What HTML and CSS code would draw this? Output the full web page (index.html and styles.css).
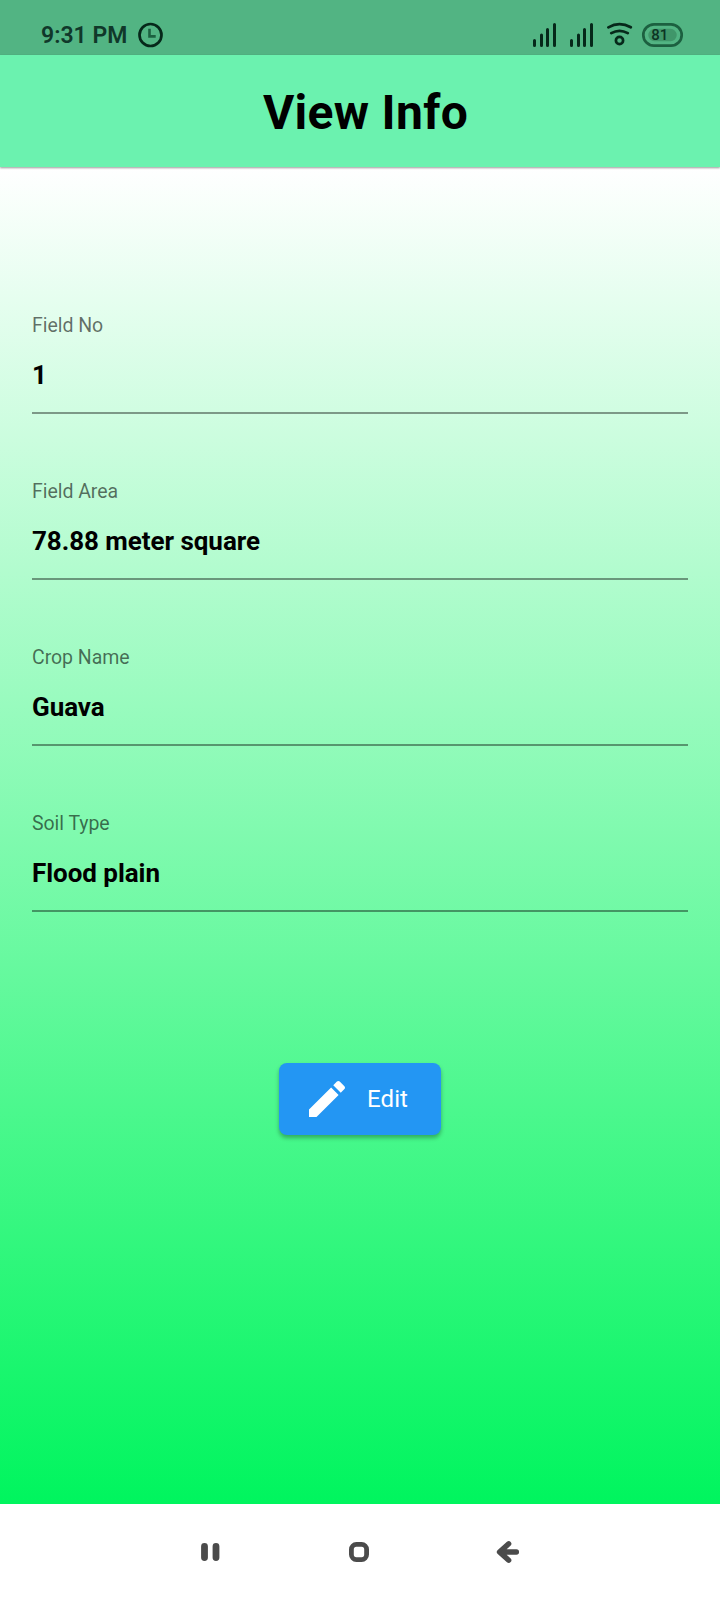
FILE: index.html
```html
<!DOCTYPE html>
<html lang="en">
<head>
<meta charset="utf-8">
<title>View Info</title>
<link rel="stylesheet" href="styles.css">
</head>
<body>
<div class="screen">
  <div class="status-bar">
    <span class="time">9:31 PM</span>
    <svg class="clock" width="26" height="26" viewBox="0 0 26 26"><circle cx="13.500" cy="13" r="11" fill="none" stroke="#06281a" stroke-width="2.700"/><path d="M12.500 6.800v7.600h6.200" fill="none" stroke="#1c6040" stroke-width="2.600"/></svg>
    <svg class="indicators" width="152" height="26" viewBox="0 0 152 26">
      <g stroke="#06281a" stroke-width="3" stroke-linecap="round">
        <path d="M2.500 18.500v5M9.500 13v10.500M15.500 7.500v16M22.500 2.500v21"/>
        <path d="M39.500 18.500v5M46.500 13v10.500M52.500 7.500v16M59.500 2.500v21"/>
      </g>
      <g fill="none" stroke="#06281a" stroke-width="2.700" stroke-linecap="round">
        <path d="M76.400 5.300Q87.500 -1 98.800 5.300M79.300 11.200Q87.500 6.500 95.800 11.200"/>
        <circle cx="87.500" cy="18.500" r="3.600"/>
      </g>
      <rect x="111.300" y="2.300" width="38.400" height="21.400" rx="10.700" fill="none" stroke="#1c6040" stroke-width="2.700"/>
      <path d="M122.500 6.800h16a6 6 0 0 1 0 12.500h-16a6 6 0 0 1 0-12.500z" fill="#40966a"/>
      <text class="battery" x="119.300" y="18.300">81</text>
    </svg>
  </div>
  <header class="app-bar"><h1 class="title">View Info</h1></header>
  <main class="content">
    <dl class="fields">
      <div class="field"><dt class="label">Field No</dt><dd class="value">1</dd></div>
      <div class="field"><dt class="label">Field Area</dt><dd class="value">78.88 meter square</dd></div>
      <div class="field"><dt class="label">Crop Name</dt><dd class="value">Guava</dd></div>
      <div class="field"><dt class="label">Soil Type</dt><dd class="value">Flood plain</dd></div>
    </dl>
    <button class="edit" type="button">
      <svg width="48" height="48" viewBox="0 0 24 24" fill="#fff"><path d="M3 17.250V21h3.750L17.810 9.940l-3.750-3.750L3 17.250zM20.710 7.040c.39-.39.39-1.020 0-1.410l-2.340-2.340c-.39-.39-1.020-.39-1.410 0l-1.830 1.830 3.750 3.750 1.830-1.830z"/></svg>
      <span>Edit</span>
    </button>
  </main>
  <nav class="nav-bar">
    <svg width="20" height="24" viewBox="0 0 20 24"><path d="M4.500 6.500v11M16 6.500v11" stroke="#4b4b4b" stroke-width="6.800" stroke-linecap="round"/></svg>
    <svg width="20" height="24" viewBox="0 0 20 24"><rect x="3.400" y="4.400" width="15.200" height="15.200" rx="5" fill="none" stroke="#4b4b4b" stroke-width="4.800"/></svg>
    <svg width="24" height="24" viewBox="0 0 24 24"><path d="M12.700 3.800L3.500 12l9.200 8.200M4.500 12h15.900" fill="none" stroke="#4b4b4b" stroke-width="5.300" stroke-linecap="round" stroke-linejoin="round"/><path d="M4 12l6-4v8z" fill="#4b4b4b"/></svg>
  </nav>
</div>
</body>
</html>
```
FILE: styles.css
```css
* { box-sizing: border-box; }
body { margin: 0; font-family: Roboto, sans-serif; }
.screen { width: 720px; height: 1600px; display: flex; flex-direction: column; background: #fff; }
.status-bar { height: 55px; padding: 22px 36px 0 41px; display: flex; align-items: flex-start; background: #52b483; }
.time { margin-top: 1px; font-size: 23px; line-height: 26px; font-weight: 600; color: #10382a; width: 96px; white-space: nowrap; }
.indicators { margin-left: auto; }
.battery { font-size: 15px; font-weight: 500; fill: #0c3323; }
.app-bar { height: 112px; display: flex; align-items: center; justify-content: center; padding: 4px 0 0 11px; background: #6bf2af; box-shadow: 0 1px 2px rgba(0,0,0,.4); z-index: 1; }
.title { margin: 0; font-size: 48px; line-height: 56px; font-weight: 700; letter-spacing: .3px; color: #000; }
.content { height: 1337px; padding: 142px 32px 0; display: flex; flex-direction: column; align-items: center; background: linear-gradient(#fff, #00f55e); }
.fields { margin: 0; width: 100%; display: flex; flex-direction: column; gap: 61px; }
.field { height: 105px; padding-top: 5px; border-bottom: 2px solid rgba(0,0,0,.4); }
.label { font-size: 19.5px; line-height: 24px; letter-spacing: -.05px; color: rgba(0,0,0,.58); }
.value { margin: 9px 0 0; font-size: 26px; line-height: 56px; height: 55px; font-weight: 700; letter-spacing: -.05px; color: #000; }
.edit { margin-top: 151px; width: 162px; height: 72px; padding: 0 0 0 24px; display: flex; align-items: center; gap: 16px; border: 0; border-radius: 8px; background: #2396f3; color: #fff; font: 400 24px/28px Roboto, sans-serif; letter-spacing: .1px; box-shadow: 0 3px 4px rgba(0,0,0,.3); }
.nav-bar { height: 96px; padding: 0 200px; display: flex; align-items: center; justify-content: space-between; }
.nav-bar svg { overflow: visible; }
```
